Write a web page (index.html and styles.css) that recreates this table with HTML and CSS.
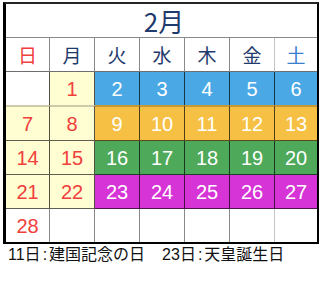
FILE: index.html
```html
<!DOCTYPE html>
<html lang="ja">
<head>
<meta charset="utf-8">
<title>2月</title>
<link rel="stylesheet" href="styles.css">
</head>
<body>
<div class="cal">
  <div class="title">2月</div>
  <div class="week head">
    <div class="dow sun">日</div>
    <div class="dow">月</div>
    <div class="dow">火</div>
    <div class="dow">水</div>
    <div class="dow">木</div>
    <div class="dow fri">金</div>
    <div class="dow sat">土</div>
  </div>
  <div class="week w1">
    <div class="d wh"></div>
    <div class="d cr red">1</div>
    <div class="d bl">2</div>
    <div class="d bl">3</div>
    <div class="d bl">4</div>
    <div class="d bl">5</div>
    <div class="d bl">6</div>
  </div>
  <div class="week w2">
    <div class="d cr red">7</div>
    <div class="d cr red">8</div>
    <div class="d or">9</div>
    <div class="d or">10</div>
    <div class="d or">11</div>
    <div class="d or">12</div>
    <div class="d or">13</div>
  </div>
  <div class="week w3">
    <div class="d cr red">14</div>
    <div class="d cr red">15</div>
    <div class="d gr">16</div>
    <div class="d gr">17</div>
    <div class="d gr">18</div>
    <div class="d gr">19</div>
    <div class="d gr">20</div>
  </div>
  <div class="week w4">
    <div class="d cr red">21</div>
    <div class="d cr red">22</div>
    <div class="d mg">23</div>
    <div class="d mg">24</div>
    <div class="d mg">25</div>
    <div class="d mg">26</div>
    <div class="d mg">27</div>
  </div>
  <div class="week w5">
    <div class="d wh red">28</div>
    <div class="d wh"></div>
    <div class="d wh"></div>
    <div class="d wh"></div>
    <div class="d wh"></div>
    <div class="d wh"></div>
    <div class="d wh"></div>
  </div>
</div>
<p class="note">11日<span class="colon">:</span>建国記念の日<span class="gap"></span>23日<span class="colon">:</span>天皇誕生日</p>
</body>
</html>
```
FILE: styles.css
```css
body {
  margin: 0;
  background: #fff;
}
.cal {
  margin: 2px 0 0 3px;
  width: 311px;
  border-left: 3px solid #000;
  border-top: 2px solid #262626;
  border-right: 2px solid #000;
  border-bottom: 2px solid #000;
}
.title {
  height: 34px;
  box-sizing: border-box;
  border-bottom: 1px solid #8a8a8a;
  display: flex;
  align-items: center;
  justify-content: center;
  padding-left: 5px;
  font-family: "Noto Sans CJK JP", sans-serif;
  font-size: 26px;
  line-height: 1;
  color: #1f3a6c;
}
.week {
  display: grid;
  grid-template-columns: 44px repeat(5, 45px) 42px;
}
.dow {
  height: 34px;
  box-sizing: border-box;
  border-right: 1px solid #8a8a8a;
  border-bottom: 1px solid #6e6e6e;
  display: flex;
  align-items: center;
  justify-content: center;
  font-family: "Noto Sans CJK JP", sans-serif;
  font-size: 19px;
  line-height: 1;
  color: #1f3a6c;
}
.dow.sun { color: #f0403c; }
.dow.fri { border-right-color: #c4c4c4; }
.dow.sat { color: #3a7fd0; border-right: none; }

.d {
  height: 34px;
  box-sizing: border-box;
  border-right: 1px solid rgba(0, 0, 0, 0.68);
  border-bottom: 1px solid rgba(0, 0, 0, 0.62);
  display: flex;
  align-items: center;
  justify-content: center;
  font-family: "Liberation Sans", Arial, sans-serif;
  font-size: 20px;
  line-height: 1;
  color: #fff;
}
.d:last-child { border-right: none; }
.w1 .d { height: 33px; border-bottom: none; }
.w2 .d { height: 36px; border-top: 2px solid rgba(0, 0, 0, 0.2); }
.w5 .d { height: 33px; border-bottom: none; border-right-color: #8a8a8a; }
.w5 .d:nth-child(6) { border-right-color: #c4c4c4; }
.w5 .d:last-child { border-right: none; }

.wh { background: #fff; }
.cr { background: #fffdd2; }
.bl { background: #4aa9e5; }
.or { background: #f5c043; }
.gr { background: #4ea95b; }
.mg { background: #d634d6; }
.red { color: #f0403c; }

.note {
  margin: 0;
  padding: 2px 0 0 8px;
  font-family: "Liberation Sans", "Noto Sans CJK JP", sans-serif;
  font-size: 16px;
  line-height: 18px;
  color: #111;
  white-space: nowrap;
}
.colon { margin: 0 2px; }
.gap { display: inline-block; width: 17px; }
```
